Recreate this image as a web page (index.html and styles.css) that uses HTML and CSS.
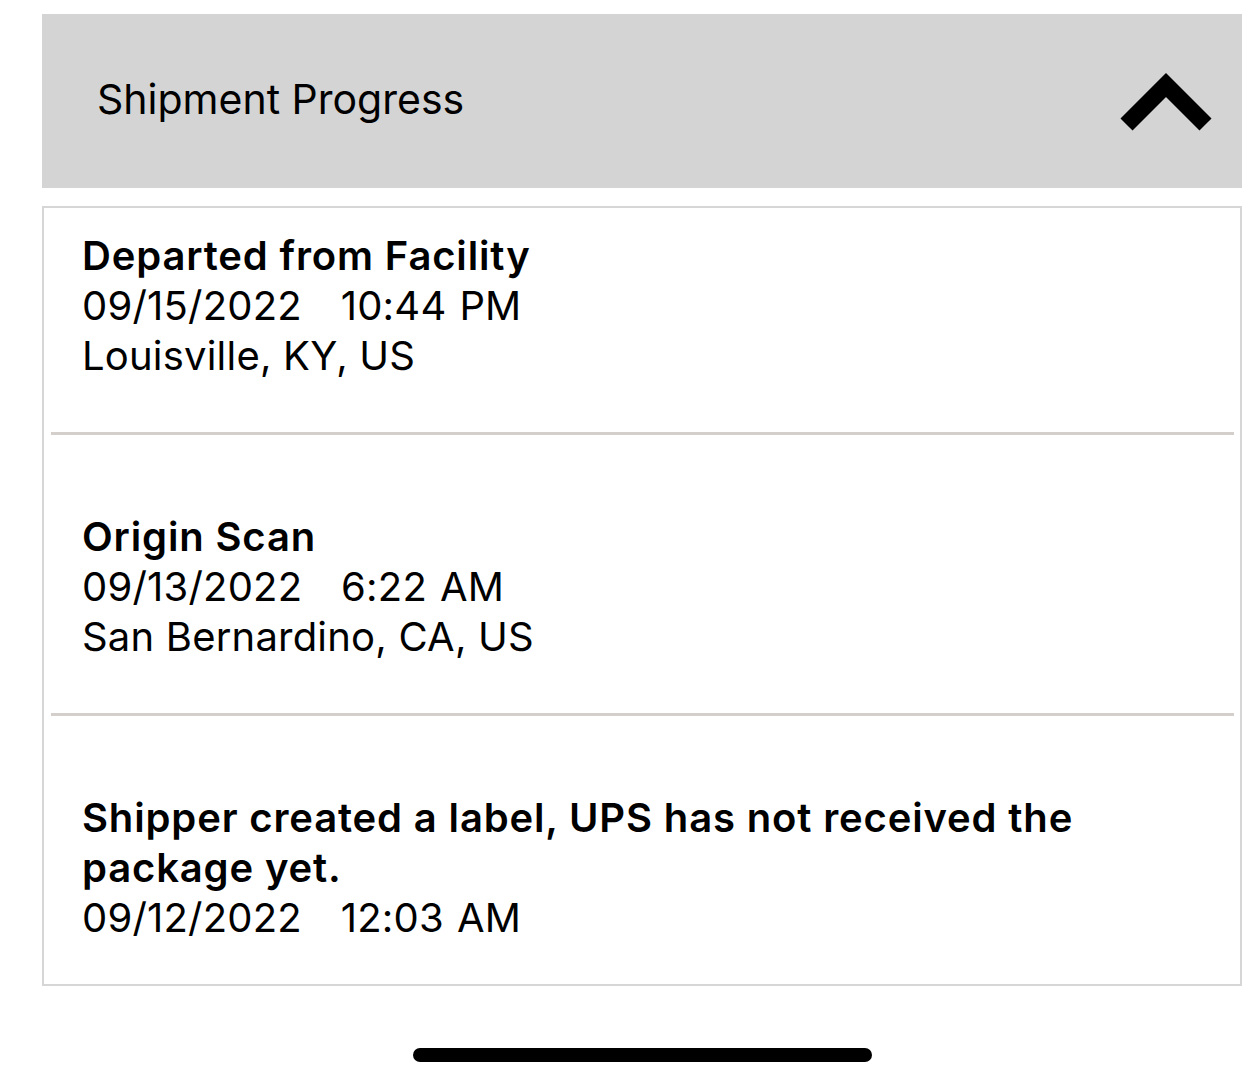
FILE: index.html
```html
<!DOCTYPE html>
<html lang="en">

<head>
    <meta charset="UTF-8">
    <meta name="viewport" content="width=device-width, initial-scale=1.0">
    <title>Shipment Progress</title>
    <link rel="stylesheet" href="styles.css">
</head>

<body>
    <div class="page">
        <!-- Collapsible header -->
        <div class="progress-header">
            <span class="progress-title">Shipment Progress</span>
            <svg class="chevron" width="92" height="60" viewBox="0 0 92 60">
                <polyline points="6.5,53.5 46,14 85.5,53.5" fill="none" stroke="#000" stroke-width="17"
                    stroke-linejoin="miter" stroke-linecap="butt" />
            </svg>
        </div>

        <!-- Event list -->
        <div class="events">
            <div class="event">
                <div class="event-title">Departed from Facility</div>
                <div class="event-line event-date">09/15/2022   10:44 PM</div>
                <div class="event-line">Louisville, KY, US</div>
            </div>
            <div class="divider"></div>
            <div class="event">
                <div class="event-title">Origin Scan</div>
                <div class="event-line event-date">09/13/2022   6:22 AM</div>
                <div class="event-line">San Bernardino, CA, US</div>
            </div>
            <div class="divider"></div>
            <div class="event">
                <div class="event-title">Shipper created a label, UPS has not received the package yet.</div>
                <div class="event-line event-date">09/12/2022   12:03 AM</div>
            </div>
        </div>

        <div class="home-indicator"></div>
    </div>
</body>

</html>
```

FILE: styles.css
```css
/* Basic reset */
* {
    margin: 0;
    padding: 0;
    box-sizing: border-box;
}

body {
    font-family: 'Inter', 'Liberation Sans', sans-serif;
    background-color: #fff;
    color: #000;
}

.page {
    padding: 14px 0 0 42px;
    width: 1259px;
}

/* Header */
.progress-header {
    width: 1200px;
    height: 174px;
    background-color: #d4d4d4;
    display: flex;
    align-items: center;
    justify-content: space-between;
    padding: 0 30px 0 55px;
}

.progress-title {
    font-size: 41px;
    margin-bottom: 4px;
}

.chevron {
    display: block;
}

/* Events card */
.events {
    width: 1200px;
    margin-top: 18px;
    border: 2px solid #d6d6d6;
}

.event {
    padding: 77px 38px 51px 38px;
    font-size: 40px;
    line-height: 50px;
}

.event:first-child {
    padding-top: 23px;
}

.event:last-child {
    padding-bottom: 41px;
}

.event-title {
    font-weight: 600;
    letter-spacing: 0.85px;
    padding-right: 120px;
}

.event-line {
    white-space: pre;
    letter-spacing: 0.2px;
}

.event-date {
    word-spacing: 1.5px;
}

.divider {
    height: 3px;
    margin: 0 6px 0 7px;
    background-color: #d4cfca;
}

/* Bottom bar */
.home-indicator {
    width: 459px;
    height: 14px;
    border-radius: 7px;
    background-color: #000;
    margin: 62px 0 0 371px;
}
```
